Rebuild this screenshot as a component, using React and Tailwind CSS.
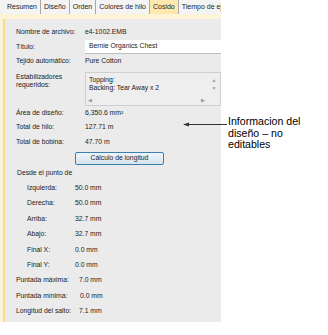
import React from "react";

const Row = ({ label, value, h = "h-[15px]", indent = false, valueX = "w-[69px]" }) => (
  <div className={`flex items-center ${h} ${indent ? "pl-[22px]" : "pl-[11px]"}`}>
    <div className={indent ? "w-[48px]" : valueX}>{label}</div>
    <div>{value}</div>
  </div>
);

export default function App() {
  const tabs = ["Resumen", "Diseño", "Orden", "Colores de hilo", "Cosido", "Tiempo de eje"];
  return (
    <div
      className="w-[328px] h-[335px] bg-white relative overflow-hidden text-[#222]"
      style={{ fontFamily: '"Liberation Sans", Arial, sans-serif' }}
    >
      <div className="w-[221px] flex flex-col">
        {/* tabs */}
        <div className="h-[14px] flex items-stretch pl-[4px] bg-[#f4f4f4] text-[7px] whitespace-nowrap overflow-hidden">
          {tabs.map((t) => (
            <div
              key={t}
              className={`flex items-center px-[3px] border-r border-[#a8a8a8] ${
                t === "Cosido" ? "bg-[#fde8b0]" : ""
              }`}
            >
              {t}
            </div>
          ))}
        </div>
        {/* panel */}
        <div className="h-[308px] bg-[#fdf3d6] pl-[3px] pt-[5px]">
          <div className="h-full bg-[#ebebeb] border-l-2 border-[#f8dc92] text-[6.8px] pt-[6px]">
            <Row label="Nombre de archivo:" value="e4-1002.EMB" />
            <div className="flex items-center h-[14px] pl-[11px]">
              <div className="w-[69px]">Título:</div>
              <div className="flex-1 h-[14px] bg-white border-b border-[#bdbdbd] flex items-center pl-[4px]">
                Bernie Organics Chest
              </div>
            </div>
            <Row label="Tejido automático:" value="Pure Cotton" />
            <div className="flex h-[34px] pl-[11px] mt-[3px]">
              <div className="w-[69px] leading-[8px] pt-[1px]">
                Estabilizadores
                <br />
                requeridos:
              </div>
              <div className="flex-1 h-[34px] border border-[#cfcfcf] bg-[#eeeeee] flex flex-col">
                <div className="flex flex-1">
                  <div className="flex-1 pl-[3px] pt-[3px] leading-[7.5px]">
                    Topping:
                    <br />
                    Backing: Tear Away x 2
                  </div>
                  <div className="w-[12px] flex flex-col items-center pt-[3px] text-[#9a9a9a] text-[5px] leading-[8px]">
                    <span>▲</span>
                    <span>▼</span>
                  </div>
                </div>
                <div className="h-[9px] flex items-center justify-between pl-[2px] pr-[15px] text-[#9a9a9a] text-[5px]">
                  <span>◀</span>
                  <span>▶</span>
                </div>
              </div>
            </div>
            <Row label="Área de diseño:" value="6,350.6 mm²" h="h-[14px]" />
            <Row label="Total de hilo:" value="127.71 m" />
            <Row label="Total de bobina:" value="47.70 m" h="h-[14px]" />
            <div className="pl-[70px] mt-[3px]">
              <div className="w-[89px] h-[13px] border border-[#3c7fb1] rounded-[2px] bg-gradient-to-b from-[#eef4fa] to-[#d6e4f1] flex items-center justify-center">
                Cálculo de longitud
              </div>
            </div>
            <div className="h-[15.4px] flex items-center pl-[12px]">Desde el punto de</div>
            <Row label="Izquierda:" value="50.0 mm" indent h="h-[15.4px]" />
            <Row label="Derecha:" value="50.0 mm" indent h="h-[15.4px]" />
            <Row label="Arriba:" value="32.7 mm" indent h="h-[15.4px]" />
            <Row label="Abajo:" value="32.7 mm" indent h="h-[15.4px]" />
            <Row label="Final X:" value="0.0 mm" indent h="h-[15.4px]" />
            <Row label="Final Y:" value="0.0 mm" indent h="h-[15.4px]" />
            <Row label="Puntada máxima:" value="7.0 mm" h="h-[15.4px]" valueX="w-[63px]" />
            <Row label="Puntada mínima:" value="0.0 mm" h="h-[15.4px]" valueX="w-[64px]" />
            <Row label="Longitud del salto:" value="7.1 mm" h="h-[15.4px]" valueX="w-[63px]" />
          </div>
        </div>
      </div>
      {/* annotation */}
      <div className="absolute left-[182px] top-[116px] flex items-start">
        <svg width="46" height="16" className="mt-[0px]" viewBox="0 0 46 16">
          <line x1="2" y1="8.5" x2="45" y2="8.5" stroke="#333" strokeWidth="1" />
          <path d="M1 8.5 L7 6.5 L7 10.5 Z" fill="#333" />
        </svg>
        <div className="text-[10.6px] leading-[11.5px] text-black pt-[0px]">
          Informacion del
          <br />
          diseño – no
          <br />
          editables
        </div>
      </div>
    </div>
  );
}
